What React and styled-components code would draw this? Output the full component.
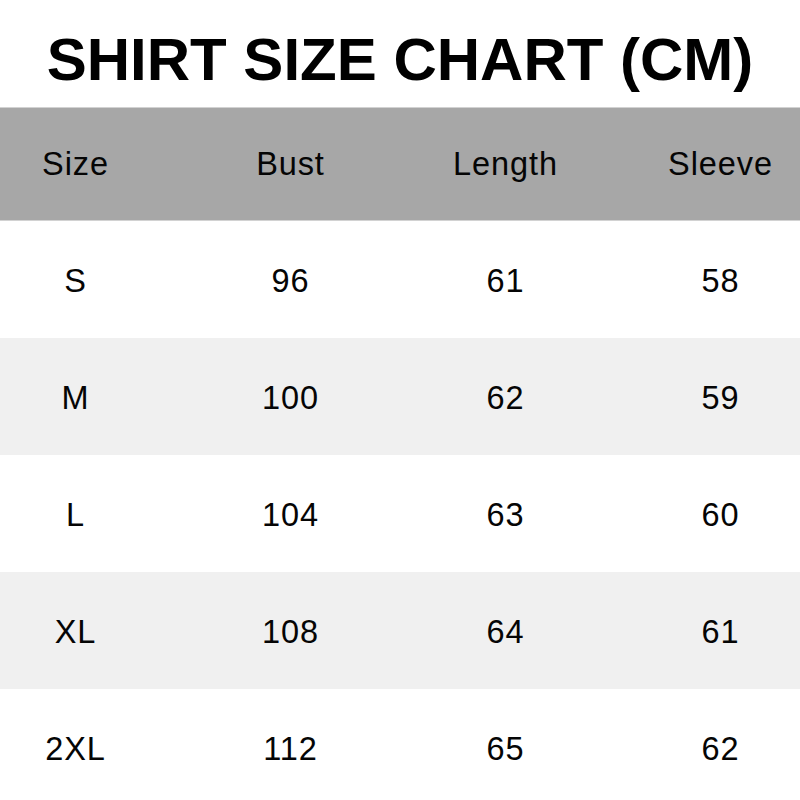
import React from 'react'
import styled, { createGlobalStyle } from 'styled-components'

const GlobalStyle = createGlobalStyle`
  html, body {
    margin: 0;
    padding: 0;
    background: #fff;
  }
  body {
    font-family: 'Liberation Sans', Arial, sans-serif;
    color: #000;
  }
`

const Page = styled.div`
  width: 800px;
  height: 800px;
  overflow: hidden;
  background: #fff;
`

const Title = styled.h1`
  margin: 0;
  height: 107px;
  box-sizing: border-box;
  padding-top: 12px;
  display: flex;
  align-items: center;
  justify-content: center;
  font-size: 60px;
  font-weight: 700;
  white-space: nowrap;
`

const Row = styled.div`
  display: grid;
  grid-template-columns: repeat(4, 215px);
  justify-content: center;
  align-items: center;
  height: ${p => (p.header ? 114 : 117)}px;
  padding-top: ${p => (p.header ? 1 : 3)}px;
  background: ${p => (p.header ? '#a7a7a7' : p.striped ? '#f0f0f0' : '#fff')};
  border-top: ${p => (p.header ? '1px solid #d2d2d2' : 'none')};
  border-bottom: ${p => (p.header ? '1px solid #d2d2d2' : 'none')};
  box-sizing: border-box;
`

// reference glyphs are a touch wider than plain Arial, hence the spacing
const Cell = styled.div`
  text-align: center;
  font-size: 32.5px;
  letter-spacing: 0.9px;
  color: #050505;
  transform: translateX(-2px);
`

const columns = ['Size', 'Bust', 'Length', 'Sleeve']

const sizes = [
  ['S', 96, 61, 58],
  ['M', 100, 62, 59],
  ['L', 104, 63, 60],
  ['XL', 108, 64, 61],
  ['2XL', 112, 65, 62]
]

export default function App() {
  return (
    <Page>
      <GlobalStyle />
      <Title>SHIRT SIZE CHART (CM)</Title>
      <Row header>
        {columns.map(c => (
          <Cell key={c}>{c}</Cell>
        ))}
      </Row>
      {sizes.map((r, i) => (
        <Row key={r[0]} striped={i % 2 === 1}>
          {r.map((v, j) => (
            <Cell key={j}>{v}</Cell>
          ))}
        </Row>
      ))}
    </Page>
  )
}
